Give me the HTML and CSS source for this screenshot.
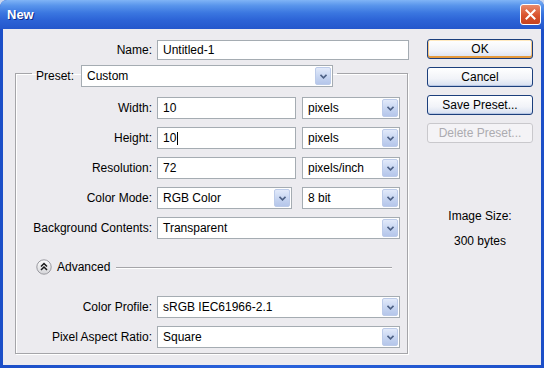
FILE: index.html
```html
<!DOCTYPE html>
<html>

<head>
    <title>New</title>
    <meta charset="utf-8">
    <link rel="stylesheet" href="styles.css">
</head>

<body>
    <div class="window">
        <div class="titlebar">
            <span class="title">New</span>
            <button class="close">
                <svg width="11" height="11" viewBox="0 0 11 11">
                    <path d="M1.5 1.5 L9.5 9.5 M9.5 1.5 L1.5 9.5" stroke="#fff" stroke-width="2" stroke-linecap="square" />
                </svg>
            </button>
        </div>

        <div class="content">
            <div class="form">
                <div class="name-row">
                    <label>Name:</label>
                    <div class="field name-field">Untitled-1</div>
                </div>

                <fieldset class="group">
                    <legend>
                        <label>Preset:</label>
                        <div class="select preset">Custom<span class="drop"><svg width="7" height="5" viewBox="0 0 7 5"><path d="M0.5 0.8 L3.5 3.8 L6.5 0.8" fill="none" stroke="#4d6185" stroke-width="1.6" /></svg></span></div>
                    </legend>

                    <div class="rows">
                        <label>Width:</label>
                        <div class="field">10</div>
                        <div class="select">pixels<span class="drop"><svg width="7" height="5" viewBox="0 0 7 5"><path d="M0.5 0.8 L3.5 3.8 L6.5 0.8" fill="none" stroke="#4d6185" stroke-width="1.6" /></svg></span></div>

                        <label>Height:</label>
                        <div class="field">10<span class="caret"></span></div>
                        <div class="select">pixels<span class="drop"><svg width="7" height="5" viewBox="0 0 7 5"><path d="M0.5 0.8 L3.5 3.8 L6.5 0.8" fill="none" stroke="#4d6185" stroke-width="1.6" /></svg></span></div>

                        <label>Resolution:</label>
                        <div class="field">72</div>
                        <div class="select">pixels/inch<span class="drop"><svg width="7" height="5" viewBox="0 0 7 5"><path d="M0.5 0.8 L3.5 3.8 L6.5 0.8" fill="none" stroke="#4d6185" stroke-width="1.6" /></svg></span></div>

                        <label>Color Mode:</label>
                        <div class="select mode">RGB Color<span class="drop"><svg width="7" height="5" viewBox="0 0 7 5"><path d="M0.5 0.8 L3.5 3.8 L6.5 0.8" fill="none" stroke="#4d6185" stroke-width="1.6" /></svg></span></div>
                        <div class="select">8 bit<span class="drop"><svg width="7" height="5" viewBox="0 0 7 5"><path d="M0.5 0.8 L3.5 3.8 L6.5 0.8" fill="none" stroke="#4d6185" stroke-width="1.6" /></svg></span></div>

                        <label>Background Contents:</label>
                        <div class="select wide">Transparent<span class="drop"><svg width="7" height="5" viewBox="0 0 7 5"><path d="M0.5 0.8 L3.5 3.8 L6.5 0.8" fill="none" stroke="#4d6185" stroke-width="1.6" /></svg></span></div>
                    </div>

                    <div class="advanced">
                        <svg class="adv-icon" width="16" height="16" viewBox="0 0 16 16">
                            <defs>
                                <linearGradient id="knop" x1="0" y1="0" x2="0" y2="1">
                                    <stop offset="0" stop-color="#ffffff" />
                                    <stop offset="1" stop-color="#d4d4d8" />
                                </linearGradient>
                            </defs>
                            <circle cx="8" cy="8" r="7.2" fill="url(#knop)" stroke="#9a9aa0" />
                            <path d="M5 7.5 L8 4.5 L11 7.5 M5 11 L8 8 L11 11" fill="none" stroke="#1a1a1a" stroke-width="1.5" />
                        </svg>
                        <span>Advanced</span>
                        <div class="line"></div>
                    </div>

                    <div class="rows">
                        <label>Color Profile:</label>
                        <div class="select wide">sRGB IEC61966-2.1<span class="drop"><svg width="7" height="5" viewBox="0 0 7 5"><path d="M0.5 0.8 L3.5 3.8 L6.5 0.8" fill="none" stroke="#4d6185" stroke-width="1.6" /></svg></span></div>

                        <label>Pixel Aspect Ratio:</label>
                        <div class="select wide">Square<span class="drop"><svg width="7" height="5" viewBox="0 0 7 5"><path d="M0.5 0.8 L3.5 3.8 L6.5 0.8" fill="none" stroke="#4d6185" stroke-width="1.6" /></svg></span></div>
                    </div>
                </fieldset>
            </div>

            <div class="side">
                <button class="knap standard">OK</button>
                <button class="knap">Cancel</button>
                <button class="knap">Save Preset...</button>
                <button class="knap" disabled>Delete Preset...</button>

                <div class="info">
                    <p>Image Size:</p>
                    <p>300 bytes</p>
                </div>
            </div>
        </div>
    </div>
</body>

</html>
```

FILE: styles.css
```css
body {
    margin: 0;
    background-color: #c9d6ef;
    font-family: "Liberation Sans", Arial, sans-serif;
    font-size: 12px;
    color: #000;
}

.window {
    width: 544px;
    height: 368px;
    display: flex;
    flex-direction: column;
    background: linear-gradient(to right, #1c4fc8, #2a63dc 50%, #1c4fc8);
    border-radius: 7px 7px 0 0;
    overflow: hidden;
}

/* titellinje */
.titlebar {
    height: 29px;
    flex: none;
    display: flex;
    align-items: center;
    justify-content: space-between;
    padding: 0 3px 0 7px;
    background: linear-gradient(to bottom, #80b4f6 0%, #5a96ec 18%, #3a76e0 45%, #2c63d6 70%, #2457cc 100%);
}

.title {
    color: #fff;
    font-weight: bold;
    font-size: 13px;
    text-shadow: 1px 1px 0 #0c2a8a;
}

.close {
    width: 21px;
    height: 21px;
    padding: 0;
    display: flex;
    align-items: center;
    justify-content: center;
    border: 1px solid #fff;
    border-radius: 3px;
    background: linear-gradient(to bottom, #e98a6a, #d9532e 55%, #c5421f);
}

/* indhold */
.content {
    flex: 1;
    display: flex;
    margin: 0 3px 3px 3px;
    background-color: #ecebef;
}

.form {
    width: 407px;
    padding-top: 11px;
}

.name-row {
    display: flex;
    align-items: center;
    height: 20px;
}

.name-row label {
    width: 154px;
    padding-right: 5px;
    box-sizing: border-box;
    text-align: right;
}

.field,
.select {
    height: 22px;
    box-sizing: border-box;
    border: 1px solid #a5acb2;
    background: #fff;
    display: flex;
    align-items: center;
    padding-left: 5px;
    white-space: nowrap;
}

.name-field {
    width: 252px;
    height: 20px;
}

.caret {
    width: 1px;
    height: 13px;
    margin-left: 1px;
    background: #000;
}

.drop {
    margin-left: auto;
    margin-right: 1px;
    width: 16px;
    height: 18px;
    box-sizing: border-box;
    display: flex;
    align-items: center;
    justify-content: center;
    border: 1px solid #bccbe9;
    border-radius: 2px;
    background: linear-gradient(to bottom, #e2eafa, #c4d3f0 60%, #b5c6ea);
}

/* gruppeboks */
.group {
    width: 393px;
    box-sizing: border-box;
    margin: -1px 0 0 12px;
    padding: 0 0 5px 0;
    min-width: 0;
    border: 1px solid #a5a5a9;
    box-shadow: 1px 1px 0 #fff, inset 1px 1px 0 #fff;
}

.group legend {
    display: flex;
    align-items: center;
    gap: 7px;
    margin-left: 16px;
    padding: 6px 4px 0 4px;
}

.preset {
    width: 252px;
}

.rows {
    display: grid;
    grid-template-columns: 141px 145px 98px;
    grid-auto-rows: 22px;
    row-gap: 8px;
    align-items: center;
    margin-top: 10px;
}

.rows label {
    text-align: right;
    padding-right: 5px;
    white-space: nowrap;
}

.rows .field {
    width: 139px;
}

.rows .mode {
    width: 135px;
}

.rows .wide {
    grid-column: 2 / 4;
}

.advanced {
    display: flex;
    align-items: center;
    height: 16px;
    margin: 20px 0 21px 20px;
}

.adv-icon {
    margin-right: 5px;
}

.advanced .line {
    flex: 1;
    height: 1px;
    margin: 1px 15px 0 6px;
    background: #a5a5a9;
    box-shadow: 0 1px 0 #fff;
}

.advanced + .rows {
    margin-top: 0;
}

/* knapper */
.side {
    width: 106px;
    margin-left: 17px;
    padding-top: 10px;
    display: flex;
    flex-direction: column;
    gap: 8px;
}

.knap {
    height: 20px;
    padding: 0;
    font-family: "Liberation Sans", Arial, sans-serif;
    font-size: 12px;
    color: #000;
    border: 1px solid #1c3f7c;
    border-radius: 3px;
    background: linear-gradient(to bottom, #ffffff, #f1f3f8 60%, #d6dff0);
    box-shadow: inset 0 -1px 0 #b7c6e4;
}

.standard {
    box-shadow: inset 0 -2px 0 #e59a3c, inset 0 1px 0 #ffe9bf, inset 1px 0 0 #f5c684, inset -1px 0 0 #f5c684;
}

.knap:disabled {
    color: #acabb0;
    border-color: #c9c8cc;
    background: #f4f3f6;
    box-shadow: none;
}

.info {
    margin-top: 58px;
    text-align: center;
}

.info p {
    margin: 0 0 10px 0;
    line-height: 15px;
}
```
